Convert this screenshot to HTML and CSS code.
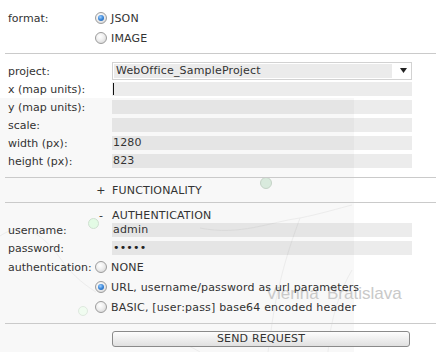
FILE: index.html
```html
<!DOCTYPE html>
<html>
<head>
<meta charset="utf-8">
<link rel="stylesheet" href="styles.css">
</head>
<body>
<div class="map">
  <div class="tile"></div>
  <svg class="roads" width="436" height="352" viewBox="0 0 436 352">
    <path d="M0 236 C20 222 40 230 60 258 C70 272 80 282 96 292" />
    <path d="M200 228 C240 236 270 222 300 218 C320 214 340 208 352 205" />
    <path d="M300 218 C292 240 284 262 276 300 C272 320 270 340 268 352" />
    <path d="M352 270 C340 290 330 320 328 352" />
    <path d="M120 340 C150 330 180 340 200 352" />
  </svg>
  <span class="pin pin1"></span>
  <span class="pin pin2"></span>
  <span class="pin pin3"></span>
  <span class="city vienna">Vienna</span>
  <span class="city bratislava">Bratislava</span>
</div>

<form class="panel">
  <div class="sec">
    <div class="row rrow"><span class="lbl">format:</span><span class="radio on"></span><span>JSON</span></div>
    <div class="row rrow"><span class="lbl"></span><span class="radio"></span><span>IMAGE</span></div>
  </div>
  <div class="sep s1"></div>

  <div class="sec s2">
    <div class="row"><span class="lbl">project:</span>
      <div class="select"><span class="selval">WebOffice_SampleProject</span>
        <svg class="arrow" width="7" height="5" viewBox="0 0 7 5"><polygon points="0,0 7,0 3.5,5" fill="#222"/></svg>
      </div>
    </div>
    <div class="row"><span class="lbl">x (map units):</span><div class="field"><span class="caret"></span></div></div>
    <div class="row"><span class="lbl">y (map units):</span><div class="field"></div></div>
    <div class="row"><span class="lbl">scale:</span><div class="field"></div></div>
    <div class="row"><span class="lbl">width (px):</span><div class="field">1280</div></div>
    <div class="row"><span class="lbl">height (px):</span><div class="field">823</div></div>
  </div>
  <div class="sep s3"></div>

  <div class="sec toggle"><span class="sign">+</span>FUNCTIONALITY</div>
  <div class="sep"></div>

  <div class="sec">
    <div class="toggle head"><span class="sign">-</span>AUTHENTICATION</div>
    <div class="row"><span class="lbl">username:</span><div class="field">admin</div></div>
    <div class="row"><span class="lbl">password:</span><div class="field dots">&#8226;&#8226;&#8226;&#8226;&#8226;</div></div>
    <div class="row rrow"><span class="lbl">authentication:</span><span class="radio"></span><span>NONE</span></div>
    <div class="row rrow"><span class="lbl"></span><span class="radio on"></span><span>URL, username/password as url parameters</span></div>
    <div class="row rrow"><span class="lbl"></span><span class="radio"></span><span>BASIC, [user:pass] base64 encoded header</span></div>
  </div>
  <div class="sep s4"></div>

  <div class="sec">
    <button type="button" class="btn">SEND REQUEST</button>
  </div>
</form>
</body>
</html>
```

FILE: styles.css
```css
html, body {
  margin: 0;
  padding: 0;
}
body {
  width: 436px;
  height: 352px;
  overflow: hidden;
  position: relative;
  background: #fff;
  font-family: "DejaVu Sans", Verdana, sans-serif;
  font-size: 11px;
  letter-spacing: 0.18px;
  color: #333;
}

/* map underlay */
.map {
  position: absolute;
  left: 0;
  top: 0;
  width: 436px;
  height: 352px;
}
.tile {
  position: absolute;
  left: 0;
  top: 98px;
  width: 354px;
  height: 254px;
  background: #f8f8f8;
}
.roads {
  position: absolute;
  left: 0;
  top: 0;
}
.roads path {
  fill: none;
  stroke: #ececec;
  stroke-width: 1;
}
.pin {
  position: absolute;
  box-sizing: border-box;
  border-radius: 50%;
}
.pin1 {
  left: 260px;
  top: 177px;
  width: 12px;
  height: 12px;
  background: #d9eadd;
  border: 1px solid #c5d3c7;
}
.pin2 {
  left: 88px;
  top: 218px;
  width: 11px;
  height: 11px;
  background: #e3fbe5;
  border: 1px solid #cfe0d1;
}
.pin3 {
  left: 78px;
  top: 306px;
  width: 10px;
  height: 10px;
  background: #f0fcf0;
  border: 1px solid #dfe9df;
}
.city {
  position: absolute;
  font-family: "Liberation Sans", Arial, sans-serif;
  font-size: 17px;
  letter-spacing: 0;
  color: #c9c9c9;
  line-height: 18px;
}
.vienna {
  left: 266px;
  top: 285px;
}
.bratislava {
  left: 327px;
  top: 285px;
}

/* form */
.panel {
  position: relative;
  padding-top: 8px;
  margin: 0;
}
.sec {
  padding-left: 8px;
}
.row {
  display: flex;
  align-items: center;
  height: 18px;
  white-space: nowrap;
}
.rrow {
  height: 20px;
}
.lbl {
  flex: none;
  width: 86px;
  letter-spacing: 0;
}
.radio {
  flex: none;
  position: relative;
  box-sizing: border-box;
  width: 12px;
  height: 12px;
  margin: 0 4px 0 1px;
  border-radius: 50%;
  border: 1px solid #9c9c9c;
  background: radial-gradient(circle at 40% 35%, #ffffff 0%, #eeeeee 45%, #cfcfcf 100%);
}
.radio.on::after {
  content: "";
  position: absolute;
  left: 2px;
  top: 2px;
  width: 6px;
  height: 6px;
  border-radius: 50%;
  background: radial-gradient(circle at 40% 35%, #9fd0ff 0%, #3a86d8 50%, #1a5aa8 100%);
}
.sep {
  height: 1px;
  background: #cacaca;
  margin-left: 5px;
}
.s1 {
  margin-top: 5px;
}
.s2 {
  margin-top: 8px;
}
.s3 {
  margin-top: 7px;
}
.s4 {
  margin-top: 6px;
}
.field {
  flex: none;
  box-sizing: border-box;
  margin-left: 18px;
  width: 300px;
  height: 14px;
  line-height: 14px;
  padding-left: 1px;
  background: rgba(0, 0, 0, 0.075);
}
.caret {
  display: inline-block;
  vertical-align: top;
  width: 1px;
  height: 12px;
  margin-top: 1px;
  background: #111;
}
.dots {
  color: #222;
  padding-left: 1px;
}
.select {
  flex: none;
  box-sizing: border-box;
  margin-left: 18px;
  width: 300px;
  height: 18px;
  padding: 1px;
  border: 1px solid #d2d2d2;
  background: #fff;
  display: flex;
  align-items: center;
}
.selval {
  box-sizing: border-box;
  width: 278px;
  height: 14px;
  line-height: 14px;
  padding-left: 2px;
  background: #ebebeb;
}
.arrow {
  margin-left: 8px;
  margin-top: -1px;
}
.toggle {
  display: flex;
  align-items: center;
  height: 24px;
  padding-left: 95px;
}
.toggle.head {
  box-sizing: border-box;
  height: 18px;
  padding-left: 87px;
  padding-top: 6px;
}
.sign {
  display: inline-block;
  width: 12px;
  margin-right: 5px;
  text-align: center;
}
.sec.toggle {
  padding-left: 95px;
}
.btn {
  display: block;
  box-sizing: border-box;
  margin: 7px 0 0 104px;
  width: 298px;
  height: 16px;
  padding: 0;
  border: 1px solid #8a8a8a;
  border-radius: 3px;
  background: linear-gradient(#fdfdfd, #e0e0e0);
  font-family: "DejaVu Sans", Verdana, sans-serif;
  font-size: 11px;
  letter-spacing: 0.18px;
  line-height: 14px;
  color: #333;
  text-align: center;
}
```
